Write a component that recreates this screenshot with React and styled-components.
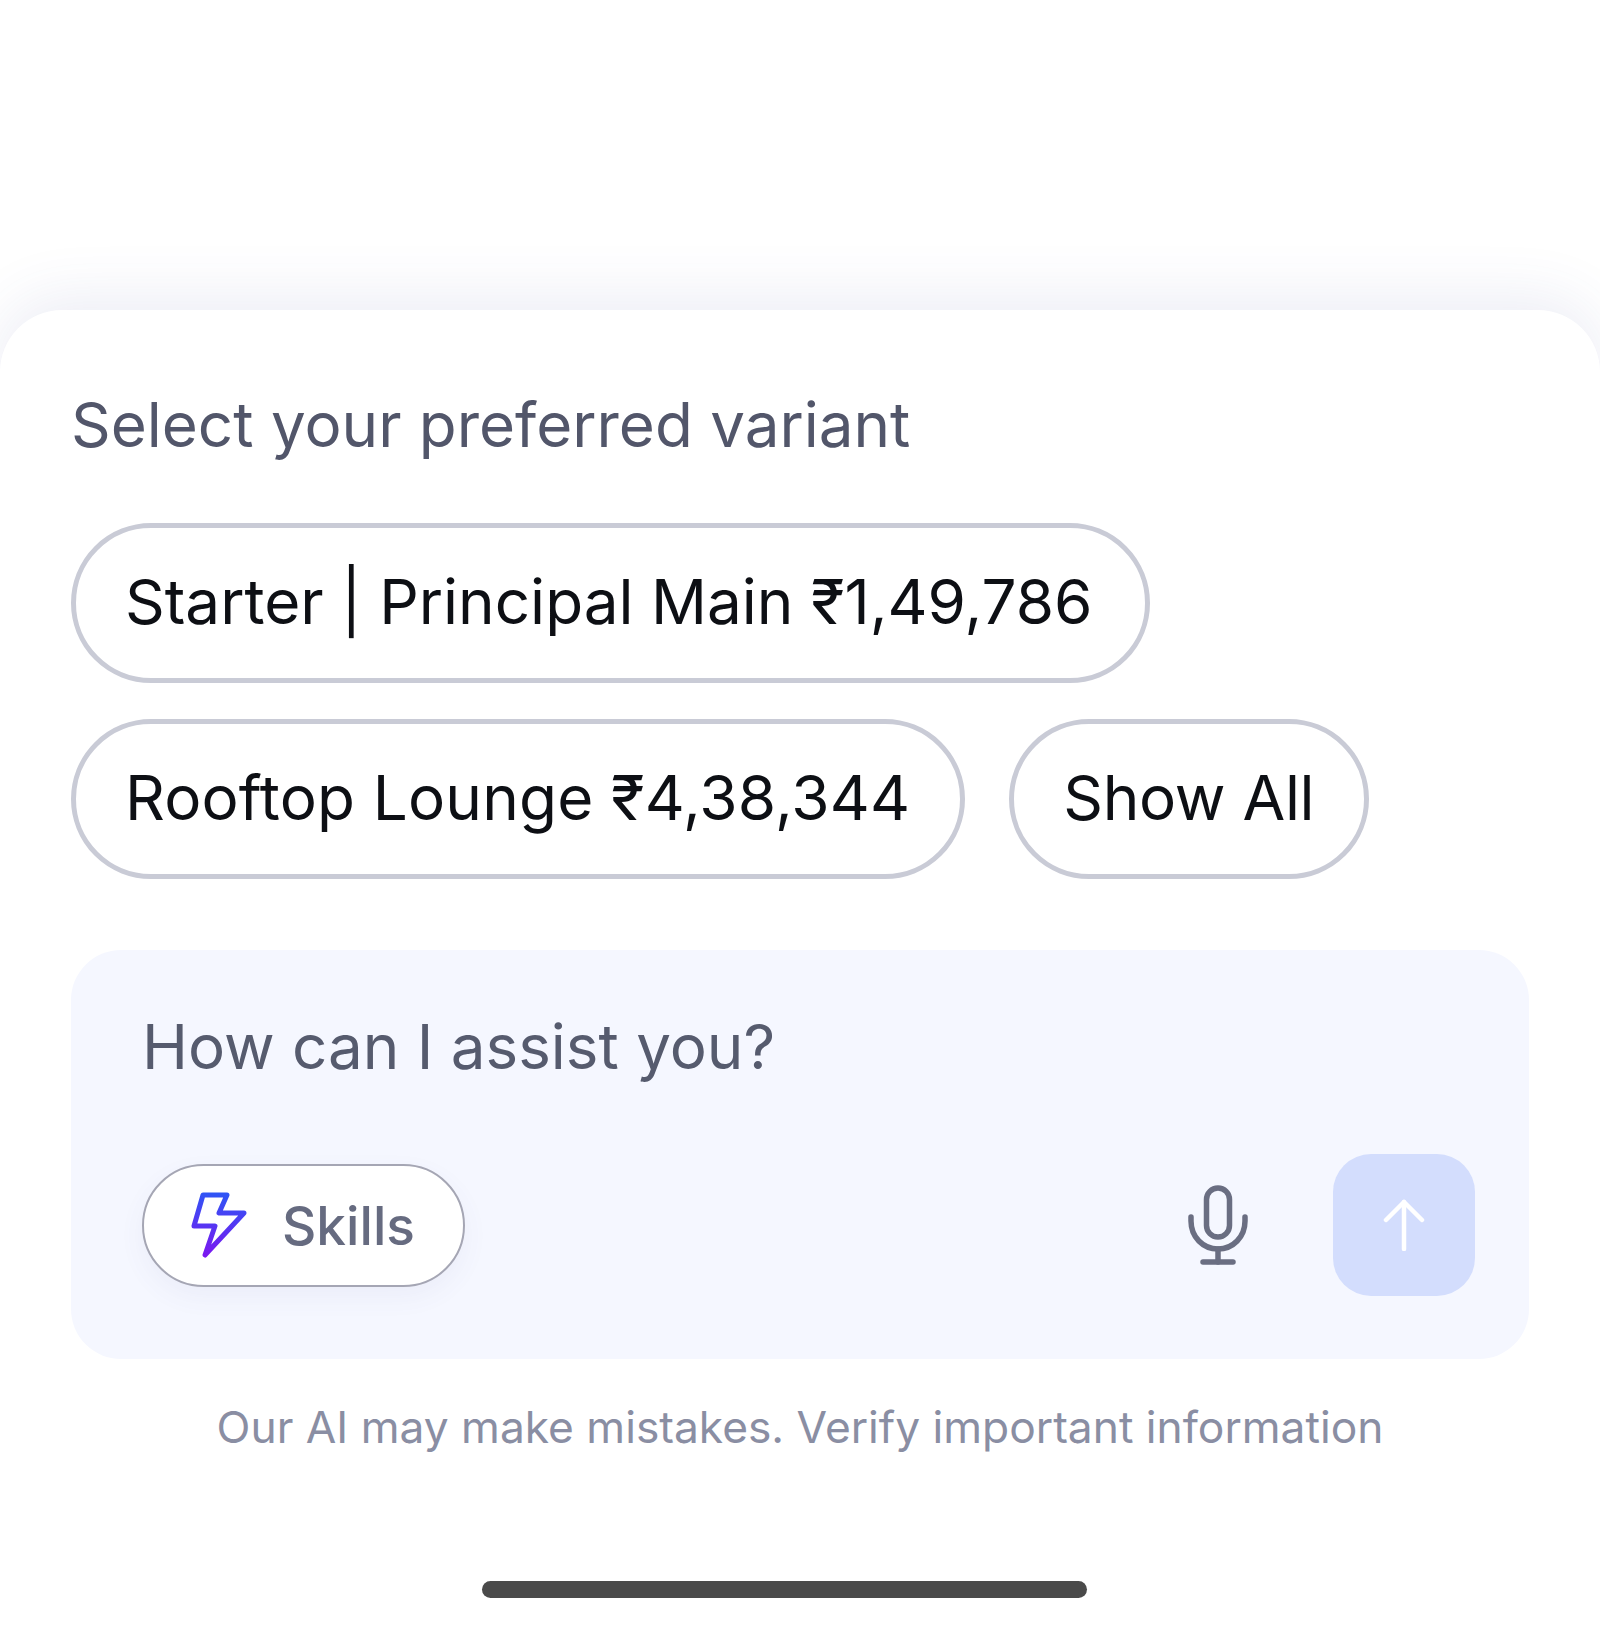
import React from "react";
import styled, { createGlobalStyle } from "styled-components";

const Global = createGlobalStyle`
  html, body { margin: 0; padding: 0; background: #fff; }
  body { font-family: Inter, "Liberation Sans", sans-serif; }
`;

const Screen = styled.div`
  width: 1600px;
  height: 1634px;
  background: #fff;
  overflow: hidden;
  display: flex;
  flex-direction: column;
  padding-top: 310px;
  box-sizing: border-box;
`;

const Sheet = styled.section`
  flex: 1;
  background: #fff;
  border-radius: 62px 62px 0 0;
  box-shadow: 0 -12px 60px rgba(70, 80, 160, 0.1);
  padding: 80px 71px 0;
  display: flex;
  flex-direction: column;
`;

const Prompt = styled.div`
  font-size: 61.9px;
  line-height: 70px;
  color: #52566a;
  height: 70px;
`;

const Chips = styled.div`
  margin-top: 63px;
  display: flex;
  flex-wrap: wrap;
  gap: 36px 44px;
  width: 1400px;
`;

const Chip = styled.button`
  height: 160px;
  box-sizing: border-box;
  border: 5px solid #c9cbd6;
  border-radius: 80px;
  background: #fff;
  padding: 0 ${(p) => p.$padEnd}px 3px 49px;
  font: inherit;
  font-size: 62px;
  letter-spacing: ${(p) => p.$tracking || 0}px;
  color: #0d0f14;
  white-space: nowrap;
`;

const Composer = styled.div`
  margin-top: 71px;
  width: 1458px;
  height: 409px;
  box-sizing: border-box;
  border-radius: 50px;
  background: #f5f7ff;
  padding: 62px 54px 63px 71px;
  display: flex;
  flex-direction: column;
  justify-content: space-between;
`;

const Placeholder = styled.div`
  font-size: 61.9px;
  line-height: 70px;
  color: #565b6e;
`;

const Controls = styled.div`
  display: flex;
  align-items: center;
`;

const SkillsPill = styled.button`
  width: 323px;
  height: 123px;
  box-sizing: border-box;
  border: 2px solid #a5a6b4;
  border-radius: 62px;
  background: #fff;
  box-shadow: 0 10px 26px rgba(80, 90, 150, 0.06);
  display: flex;
  align-items: center;
  gap: 35px;
  padding: 0 0 0 47px;
  font: inherit;
  font-size: 53.2px;
  font-weight: 500;
  color: #666b80;
`;

const MicButton = styled.div`
  margin-left: auto;
  margin-right: 85px;
  display: flex;
`;

const SendButton = styled.button`
  width: 142px;
  height: 142px;
  border: 0;
  padding: 0;
  border-radius: 38px;
  background: #d3ddfd;
  display: flex;
  align-items: center;
  justify-content: center;
`;

const Disclaimer = styled.div`
  margin-top: 42px;
  width: 1458px;
  text-align: center;
  font-size: 44.3px;
  line-height: 52px;
  color: #8a8ea3;
`;

const HomeBar = styled.div`
  margin: 128px auto 0 411px;
  width: 605px;
  height: 17px;
  border-radius: 9px;
  background: #4a4a4a;
`;

const Bolt = () => (
  <svg width="56" height="66" viewBox="0 0 56 66" fill="none">
    <defs>
      <linearGradient id="boltGrad" x1="30" y1="2" x2="24" y2="64" gradientUnits="userSpaceOnUse">
        <stop offset="0" stopColor="#2f55f5" />
        <stop offset="1" stopColor="#7a18f0" />
      </linearGradient>
    </defs>
    <path
      d="M12 3H36L28 21H53L14 63L24 34H3Z"
      stroke="url(#boltGrad)"
      strokeWidth="5"
      strokeLinejoin="round"
      strokeLinecap="round"
    />
  </svg>
);

const Mic = () => (
  <svg width="60" height="80" viewBox="0 0 60 80" fill="none" stroke="#6a6e82" strokeWidth="5.5" strokeLinecap="round">
    <rect x="18.5" y="3" width="23" height="49" rx="11.5" />
    <path d="M3 32V36C3 52 15 64 30 64C45 64 57 52 57 36V32" />
    <path d="M30 64V77" />
    <path d="M15 77H45" />
  </svg>
);

const ArrowUp = () => (
  <svg width="42" height="52" viewBox="0 0 42 52" fill="none" stroke="#fff" strokeWidth="4.5" strokeLinecap="round" strokeLinejoin="round">
    <path d="M21 50V3" />
    <path d="M3 21L21 3L39 21" />
  </svg>
);

export default function App() {
  return (
    <>
      <Global />
      <Screen>
        <Sheet>
          <Prompt>Select your preferred variant</Prompt>
          <Chips>
            <Chip $padEnd={53}>Starter | Principal Main ₹1,49,786</Chip>
            <Chip $padEnd={50} $tracking={0.17}>Rooftop Lounge ₹4,38,344</Chip>
            <Chip $padEnd={50} $tracking={-0.3}>Show All</Chip>
          </Chips>
          <Composer>
            <Placeholder>How can I assist you?</Placeholder>
            <Controls>
              <SkillsPill>
                <Bolt />
                Skills
              </SkillsPill>
              <MicButton>
                <Mic />
              </MicButton>
              <SendButton>
                <ArrowUp />
              </SendButton>
            </Controls>
          </Composer>
          <Disclaimer>Our AI may make mistakes. Verify important information</Disclaimer>
          <HomeBar />
        </Sheet>
      </Screen>
    </>
  );
}
